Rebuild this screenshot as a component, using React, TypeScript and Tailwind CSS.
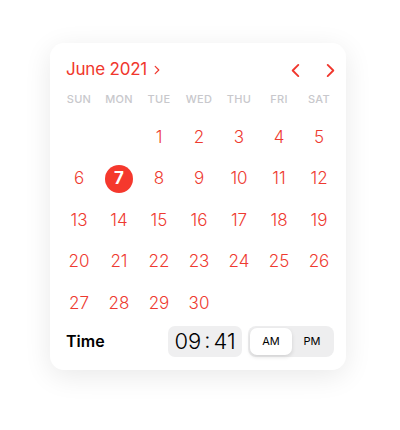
import React from "react";

const weekdays = ["SUN", "MON", "TUE", "WED", "THU", "FRI", "SAT"];

// June 2021 starts on a Tuesday
const days: (number | null)[] = [null, null, ...Array.from({ length: 30 }, (_, i) => i + 1)];

function Chevron({ dir, className }: { dir: "left" | "right"; className?: string }) {
  return (
    <svg viewBox="0 0 10 16" className={className} fill="none">
      <path
        d={dir === "left" ? "M8 2L2 8l6 6" : "M2 2l6 6-6 6"}
        stroke="currentColor"
        strokeWidth="2"
        strokeLinecap="round"
        strokeLinejoin="round"
      />
    </svg>
  );
}

export default function App() {
  const selected = 7;

  return (
    <div
      className="flex min-h-[430px] w-[400px] items-start bg-white pl-[50px] pt-[43px]"
      style={{ fontFamily: "Inter, 'Noto Sans', sans-serif" }}
    >
      <div className="w-[296px] rounded-[14px] bg-white pb-[13px] pl-[9px] pr-[7px] pt-[12px] shadow-[0_6px_28px_rgba(0,0,0,0.09)]">
        <div className="flex h-[30px] items-center justify-between pl-[7px] pr-[3px] text-[#f0372d]">
          <div className="flex items-center gap-[7px]">
            <span className="text-[17px] font-normal tracking-[-0.2px]">June 2021</span>
            <Chevron dir="right" className="h-[10px] w-[6px]" />
          </div>
          <div className="flex items-center gap-[24px]">
            <Chevron dir="left" className="h-[15px] w-[11px]" />
            <Chevron dir="right" className="h-[15px] w-[11px]" />
          </div>
        </div>

        <div className="mt-[6px] grid h-[16px] grid-cols-7 items-center">
          {weekdays.map((d) => (
            <div key={d} className="text-center text-[11px] font-medium tracking-[0.3px] text-[#c8c8cc]">
              {d}
            </div>
          ))}
        </div>

        <div className="mt-[10px] grid grid-cols-7 auto-rows-[41.4px]">
          {days.map((d, i) => (
            <div key={i} className="flex items-center justify-center">
              {d === null ? null : d === selected ? (
                <span className="flex h-[28px] w-[28px] items-center justify-center rounded-full bg-[#f5382d] text-[17px] font-bold text-white">
                  {d}
                </span>
              ) : (
                <span className="text-[17px] font-light text-[#ee3a30]">{d}</span>
              )}
            </div>
          ))}
        </div>

        <div className="mt-[2px] flex h-[31px] items-center pl-[7px] pr-[5px]">
          <span className="text-[16px] font-semibold text-black">Time</span>
          <div className="ml-auto flex h-[31px] w-[74px] items-center justify-center rounded-[7px] bg-[#efeff0] text-[22px] font-light text-black">
            <span>09</span>
            <span className="mx-[3px] pb-[2px]">:</span>
            <span>41</span>
          </div>
          <div className="ml-[6px] flex h-[31px] w-[86px] items-center rounded-[8px] bg-[#eeeeef] p-[2px]">
            <div className="flex h-full w-[42px] items-center justify-center rounded-[7px] bg-white text-[11px] text-black shadow-[0_2px_4px_rgba(0,0,0,0.12)]">
              AM
            </div>
            <div className="flex h-full flex-1 items-center justify-center text-[11px] text-black">
              PM
            </div>
          </div>
        </div>
      </div>
    </div>
  );
}
